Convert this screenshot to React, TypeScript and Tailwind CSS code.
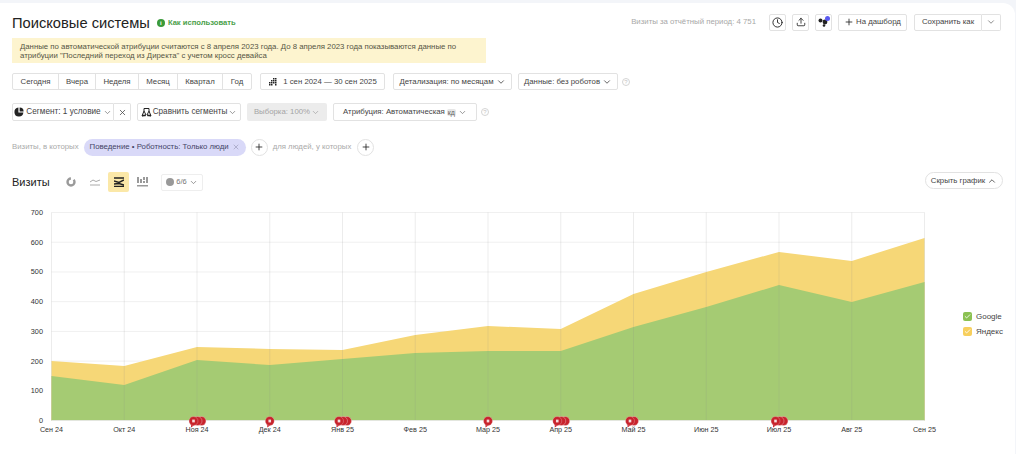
import React from 'react';
import { Check, ChevronDown, ChevronUp, Clock, Plus, Upload, X } from 'lucide-react';

const ranges = [
  { label: 'Сегодня', width: 'w-[45px]' },
  { label: 'Вчера', width: 'w-[37px]' },
  { label: 'Неделя', width: 'w-[43px]' },
  { label: 'Месяц', width: 'w-[39px]' },
  { label: 'Квартал', width: 'w-[45px]' },
  { label: 'Год', width: 'w-[29px]' }
];

const months = ['Сен 24', 'Окт 24', 'Ноя 24', 'Дек 24', 'Янв 25', 'Фев 25', 'Мар 25', 'Апр 25', 'Май 25', 'Июн 25', 'Июл 25', 'Авг 25', 'Сен 25'];
const ticks = [700, 600, 500, 400, 300, 200, 100, 0];

// pixel heights read off the picture, svg starts at y=205
const greenTop = [171, 180, 155, 160, 154, 148, 146, 146, 122, 102, 80, 97, 77];
const yellowTop = [156, 161, 142, 144, 145, 130, 121, 124, 89, 67, 47, 56, 33];
const notes: Record<number, number> = { 2: 3, 3: 1, 4: 3, 6: 1, 7: 3, 8: 2, 10: 3 };

const X0 = 51.5;
const STEP = 72.75;
const Y0 = 215.5;
const xAt = (i: number) => X0 + i * STEP;
const line = (values: number[]) => values.map((v, i) => `${xAt(i)},${v}`).join(' ');

const Chart = () => (
  <svg width="960" height="235" className="shrink-0" style={{ fontFamily: '"Liberation Sans", sans-serif' }}>
    {ticks.map((t, i) => (
      <g key={t}>
        <line x1={X0} x2={xAt(12)} y1={7.5 + i * 29.72} y2={7.5 + i * 29.72} stroke="#f0f0f0" />
        <text x="43" y={10 + i * 29.72} textAnchor="end" fontSize="7.3" fill="#333333">{t}</text>
      </g>
    ))}
    <polygon points={`${X0},${Y0} ${line(yellowTop)} ${xAt(12)},${Y0}`} fill="#f6d777" />
    <polygon points={`${X0},${Y0} ${line(greenTop)} ${xAt(12)},${Y0}`} fill="#a5cb73" />
    {months.map((m, i) => (
      <g key={i}>
        <line x1={xAt(i)} x2={xAt(i)} y1="7.5" y2={Y0} stroke="#8a8a8a" strokeOpacity="0.16" />
        <text x={xAt(i)} y="227" textAnchor="middle" fontSize="7.2" fill="#333333">{m}</text>
      </g>
    ))}
    <line x1={X0} x2={xAt(12)} y1={Y0} y2={Y0} stroke="#e3e6de" />
    {Object.entries(notes).map(([key, count]) => {
      const x = xAt(Number(key)) - (count > 1 ? 3.5 : 0);
      return (
        <g key={key}>
          {count > 2 && <circle cx={x + 8} cy="216" r="4.5" fill="#c8232c" stroke="#f3d5d5" strokeWidth="0.4" />}
          {count > 1 && <circle cx={x + 4} cy="216" r="4.5" fill="#c8232c" stroke="#f3d5d5" strokeWidth="0.4" />}
          <path d={`M${x - 2.5} 219 L${x - 2.5} 222.5 L${x + 1} 220 Z`} fill="#c8232c" />
          <circle cx={x} cy="216" r="4.5" fill="#c8232c" stroke="#f3d5d5" strokeWidth="0.3" />
          <rect x={x - 1.3} y="214.6" width="2.6" height="2.8" fill="#f6dcdc" />
        </g>
      );
    })}
  </svg>
);

const Help = () => (
  <span className="ml-[4px] flex h-[8px] w-[8px] items-center justify-center rounded-full border border-[#d4d4d4] text-[6px] leading-none text-[#c4c4c4]">?</span>
);

const Btn = ({ children, className = '' }: { children: React.ReactNode; className?: string }) => (
  <div className={`flex items-center rounded-[2px] border border-[#e2e2e2] bg-white text-[#444444] ${className}`}>{children}</div>
);

const PieIcon = () => (
  <svg width="10" height="10" viewBox="0 0 10 10" className="shrink-0">
    <path d="M4.4 .6 A4.5 4.5 0 1 0 9.4 5.6 L4.4 5.6 Z" fill="#222222" />
    <path d="M5.6 .4 A4 4 0 0 1 9.6 4.4 L5.6 4.4 Z" fill="#222222" />
  </svg>
);

const ScalesIcon = () => (
  <svg width="11" height="10" viewBox="0 0 11 10" className="shrink-0" fill="none" stroke="#222222" strokeWidth="1">
    <path d="M1 9 L3 4 L5 8 Z M6 8 L8 4 L10 9 Z M3 4 L3 1.5 L8 1.5 L8 4" />
    <path d="M1 8.5 H4.6 M6.4 8.5 H10" strokeWidth="1.6" />
  </svg>
);

const CalendarIcon = () => (
  <svg width="10" height="8" viewBox="0 0 10 8" fill="#222222" className="shrink-0">
    <rect x="5" y="0" width="1.5" height="1.5" /><rect x="7" y="0" width="1.5" height="1.5" />
    <rect x="3" y="2" width="1.5" height="1.5" /><rect x="5" y="2" width="1.5" height="1.5" /><rect x="7" y="2" width="1.5" height="1.5" />
    <rect x="1" y="4" width="1.5" height="1.5" /><rect x="3" y="4" width="1.5" height="1.5" /><rect x="5" y="4" width="1.5" height="1.5" /><rect x="7" y="4" width="1.5" height="1.5" />
    <rect x="1" y="6" width="1.5" height="1.5" /><rect x="3" y="6" width="1.5" height="1.5" /><rect x="7" y="6" width="1.5" height="1.5" />
  </svg>
);

const App = () => {
  return (
    <div className="h-[454px] w-[1016px] overflow-hidden bg-[#f3f5f9] pt-[3px] pr-[1px] text-[7.8px] leading-none whitespace-nowrap text-[#444444]" style={{ fontFamily: '"Liberation Sans", Arial, sans-serif' }}>
      <div className="h-full rounded-tr-xl bg-white">
        {/* Header */}
        <div className="flex h-[18px] translate-y-[10px] items-center pr-[14px] pl-[12px]">
          <h1 className="mt-[2px] text-[14.7px] leading-none font-normal text-[#222222]">Поисковые системы</h1>
          <span className="mt-[2px] ml-[7px] flex h-[8px] w-[8px] items-center justify-center rounded-full bg-[#3a9a3a] text-[6px] font-bold text-white">i</span>
          <span className="mt-[2px] ml-[3px] text-[7.6px] font-bold text-[#4a9f4a]">Как использовать</span>
          <span className="ml-auto text-[#a8a8a8]">Визиты за отчётный период: 4 751</span>
          <Btn className="ml-[13px] h-[17px] w-[17px] justify-center"><Clock size={11} color="#222222" strokeWidth={2} /></Btn>
          <Btn className="ml-[6px] h-[17px] w-[17px] justify-center"><Upload size={10} color="#222222" strokeWidth={2} /></Btn>
          <Btn className="relative ml-[6px] h-[17px] w-[17px] justify-center">
            <svg width="11" height="10" viewBox="0 0 11 10" fill="#222222">
              <circle cx="2.5" cy="3.5" r="2" /><circle cx="7" cy="5" r="2.4" /><circle cx="6" cy="8.5" r="1.3" />
            </svg>
            <span className="absolute top-[1px] right-[1px] h-[5px] w-[5px] rounded-full bg-[#5a5af0]" />
          </Btn>
          <Btn className="ml-[6px] h-[17px] w-[69px] justify-center text-[#333333]"><Plus size={10} color="#222222" className="mr-[2px]" />На дашборд</Btn>
          <Btn className="ml-[7px] h-[17px] w-[68px] justify-center rounded-r-none text-[#333333]">Сохранить как</Btn>
          <Btn className="h-[17px] w-[19px] justify-center rounded-l-none border-l-0"><ChevronDown size={10} color="#777777" /></Btn>
        </div>

        {/* Attribution notice */}
        <div className="mt-[17px] ml-[12px] h-[25px] w-[474px] bg-[#fdf4cf] px-[8px] pt-[4px] text-[7.8px] leading-[9px] text-[#555544]">
          Данные по автоматической атрибуции считаются с 8 апреля 2023 года. До 8 апреля 2023 года показываются данные по<br />
          атрибуции "Последний переход из Директа" с учетом кросс девайса
        </div>

        {/* Period row */}
        <div className="mt-[10px] ml-[12px] flex h-[17px] items-center">
          <div className="flex h-full rounded-[2px] border border-[#e2e2e2]">
            {ranges.map((r, i) => (
              <div key={r.label} className={`flex items-center justify-center ${r.width} ${i > 0 ? 'border-l border-[#e2e2e2]' : ''}`}>{r.label}</div>
            ))}
          </div>
          <Btn className="ml-[8px] h-full w-[125px] justify-center gap-[5px] text-[#333333]"><CalendarIcon />1 сен 2024 — 30 сен 2025</Btn>
          <Btn className="ml-[8px] h-full w-[119px] justify-center gap-[2px]">Детализация: по месяцам<ChevronDown size={10} /></Btn>
          <Btn className="ml-[6px] h-full w-[100px] justify-center gap-[2px]">Данные: без роботов<ChevronDown size={10} /></Btn>
          <Help />
        </div>

        {/* Segment row */}
        <div className="mt-[13px] ml-[12px] flex h-[18px] items-center">
          <Btn className="h-full w-[102px] justify-center gap-[2px] rounded-r-none text-[8.2px]"><PieIcon />Сегмент: 1 условие<ChevronDown size={9} color="#777777" /></Btn>
          <Btn className="h-full w-[17px] justify-center rounded-l-none border-l-0"><X size={9} color="#444444" /></Btn>
          <Btn className="ml-[6px] h-full w-[104px] justify-center gap-[1px] text-[8.2px]"><ScalesIcon />Сравнить сегменты<ChevronDown size={9} color="#777777" /></Btn>
          <div className="ml-[6px] flex h-full w-[80px] items-center justify-center gap-[1px] rounded-[2px] bg-[#ececec] text-[#a4a4a4]">Выборка: 100%<ChevronDown size={9} /></div>
          <Btn className="ml-[6px] h-full w-[144px] justify-center gap-[2px]">
            Атрибуция: Автоматическая
            <span className="rounded-[2px] bg-[#e6e6e6] px-[1px] text-[7px] text-[#666666]">кд</span>
            <ChevronDown size={9} color="#777777" />
          </Btn>
          <Help />
        </div>

        {/* Filter chips */}
        <div className="mt-[17px] ml-[12px] flex h-[18px] items-center text-[#aaaaaa]">
          <span>Визиты, в которых</span>
          <div className="ml-[5px] flex h-[17px] w-[162px] items-center justify-center gap-[3px] rounded-full bg-[#d9d9f8] text-[#444466]">
            Поведение • Роботность: Только люди<X size={8} color="#9a9ab8" />
          </div>
          <div className="ml-[5px] flex h-[17px] w-[17px] items-center justify-center rounded-full border border-[#e2e2e2]"><Plus size={10} color="#222222" /></div>
          <span className="ml-[5px]">для людей, у которых</span>
          <div className="ml-[6px] flex h-[17px] w-[17px] items-center justify-center rounded-full border border-[#e2e2e2]"><Plus size={10} color="#222222" /></div>
        </div>

        {/* Chart toolbar */}
        <div className="mt-[16px] flex h-[20px] items-center pr-[12px] pl-[12px]">
          <span className="w-[38px] text-[11px] text-[#222222]">Визиты</span>
          <svg width="10" height="10" viewBox="0 0 10 10" className="ml-[16px]"><circle cx="5" cy="5" r="3.5" fill="none" stroke="#9a9a9a" strokeWidth="2.4" strokeDasharray="16 3" /></svg>
          <svg width="12" height="8" viewBox="0 0 12 8" fill="none" stroke="#aaaaaa" className="ml-[13px]"><path d="M1 4 L4 2 L7 3.5 L11 2" /><path d="M1 7 H11" /></svg>
          <div className="ml-[7px] flex h-[20px] w-[21px] items-center justify-center rounded-[2px] bg-[#fbe8a8]">
            <svg width="10" height="10" viewBox="0 0 10 10" fill="none" stroke="#222222" strokeWidth="1.4"><path d="M0 1 H10 M0 4 L5 5.5 L10 3 M0 7 L5 6.5 L10 8 M0 9.4 H10" /></svg>
          </div>
          <svg width="11" height="10" viewBox="0 0 11 10" fill="#9a9a9a" className="ml-[8px]">
            <rect x="0" y="0" width="2" height="6" /><rect x="3" y="2" width="2" height="4" /><rect x="6" y="0" width="2" height="3" /><rect x="9" y="0" width="2" height="6" />
            <rect x="0" y="8" width="11" height="1.5" /><rect x="6" y="4" width="2" height="2" />
          </svg>
          <Btn className="ml-[13px] h-[17px] w-[42px] justify-center gap-[2px] border-[#eeeeee] text-[7.5px] text-[#777777]">
            <span className="h-[8px] w-[8px] rounded-full bg-[#999999]" />6/6<ChevronDown size={9} />
          </Btn>
          <div className="mb-[3px] ml-auto flex h-[17px] w-[78px] items-center justify-center gap-[2px] rounded-full border border-[#e2e2e2] text-[#444444]">Скрыть график<ChevronUp size={10} /></div>
        </div>

        {/* Chart and legend */}
        <div className="mt-[13px] flex">
          <Chart />
          <div className="mt-[107px] ml-[3px] flex flex-col gap-[6px] text-[8px] text-[#444444]">
            <div className="flex h-[9px] items-center gap-[4px]">
              <span className="flex h-[9px] w-[9px] items-center justify-center rounded-[2px] bg-[#8bc152]"><Check size={7} color="#ffffff" strokeWidth={3} /></span>Google
            </div>
            <div className="flex h-[9px] items-center gap-[4px]">
              <span className="flex h-[9px] w-[9px] items-center justify-center rounded-[2px] bg-[#f7cf5d]"><Check size={7} color="#ffffff" strokeWidth={3} /></span>Яндекс
            </div>
          </div>
        </div>
      </div>
    </div>
  );
};

export default App;
